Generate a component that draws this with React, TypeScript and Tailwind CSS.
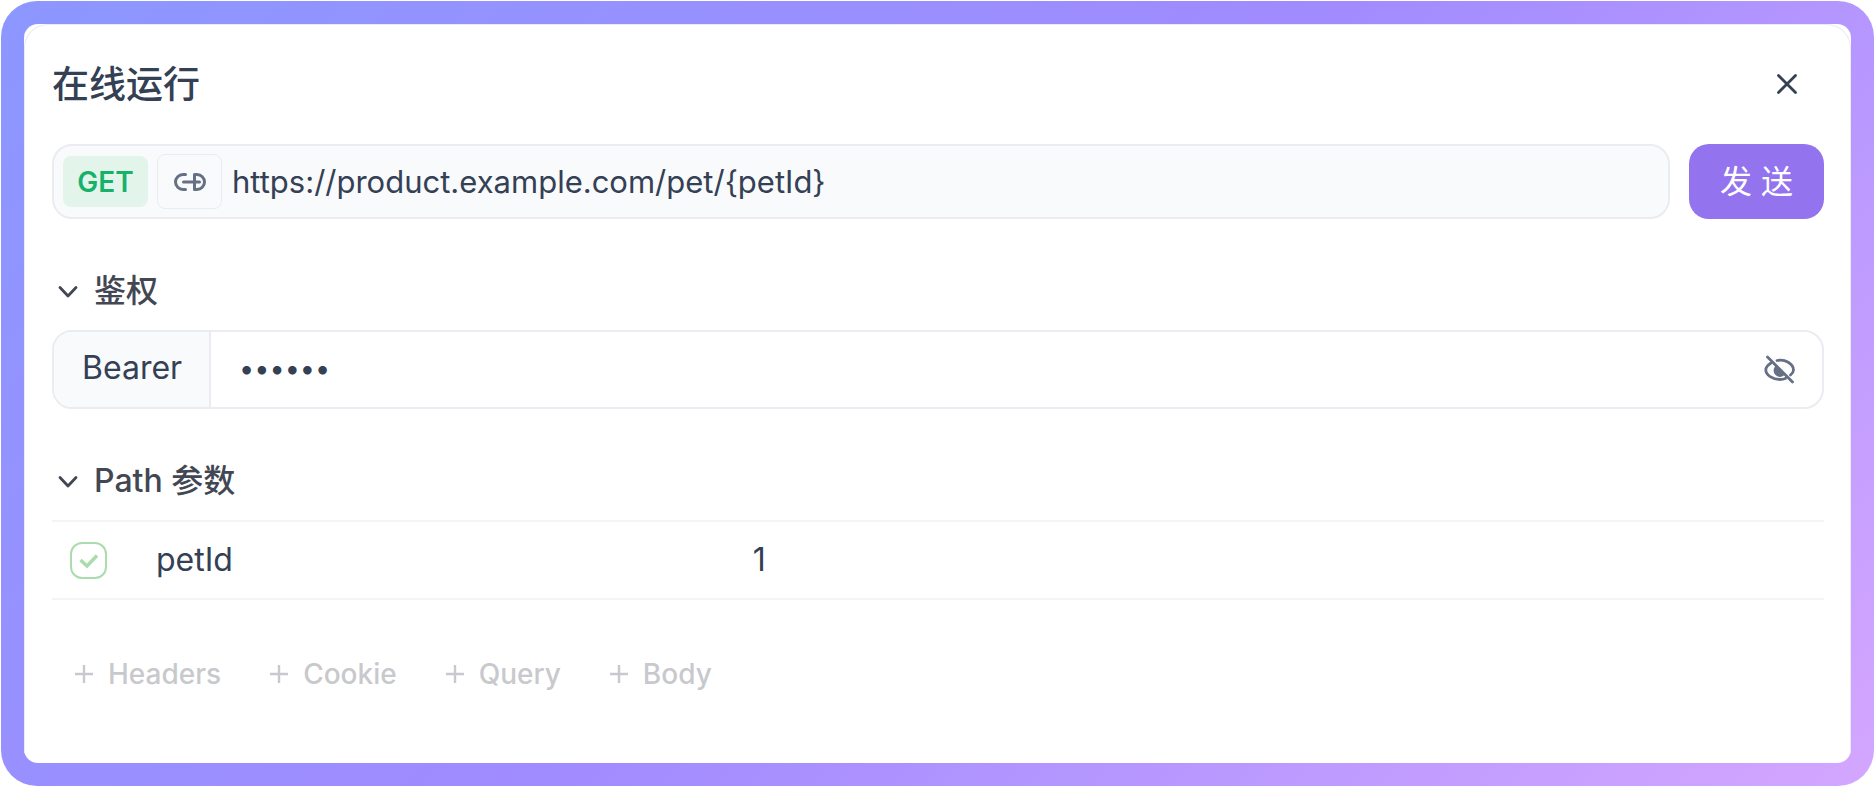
import React, { useState } from "react";

const extras = ["Headers", "Cookie", "Query", "Body"];

const Chevron = () => (
  <svg className="w-5 h-5" viewBox="0 0 20 20" fill="none" stroke="currentColor" strokeWidth="2.8" strokeLinecap="round" strokeLinejoin="round">
    <path d="M2 6.500l8 8.500 8-8.500" />
  </svg>
);

const SectionTitle = ({ children }: { children: React.ReactNode }) => (
  <h2 className="mt-[52px] mb-[19px] text-[#424753]">
    <button type="button" className="flex items-center gap-4 h-10 pl-1.5 text-[32px] font-medium">
      <Chevron />
      {children}
    </button>
  </h2>
);

const App = () => {
  const [token, setToken] = useState("123456");

  return (
    <div className="min-h-screen flex pt-px pl-px bg-white font-['Inter','Noto_Sans_CJK_SC',sans-serif] text-[#344054]">
      <div className="flex flex-1 p-[23px] rounded-[36px] bg-linear-135 from-[#8c97ff] via-[#a08bff] to-[#d4a6ff]">
        <main className="flex-1 min-w-0 rounded-[14px] bg-white overflow-hidden">
          <div className="h-full pl-[27px] pr-[26px] pt-10 pb-10 border border-[#ebecf0] border-b-0 rounded-t-[24px]">
            {/* Title bar */}
            <header className="flex items-center justify-between h-10 mb-[39px]">
              <h1 className="text-[37px] font-medium">在线运行</h1>
              <button type="button" aria-label="关闭" className="mr-[25px]">
                <svg className="w-6 h-6" viewBox="0 0 24 24" fill="none" stroke="currentColor" strokeWidth="2.8" strokeLinecap="round">
                  <path d="M3.500 2.500l17 17M20.500 2.500l-17 17" />
                </svg>
              </button>
            </header>

            {/* Request line */}
            <div className="flex gap-[19px]">
              <div className="flex flex-1 min-w-0 items-center h-[75px] px-[9px] border-2 border-[#ebecf1] rounded-[20px] bg-[#f9fafc]">
                <span className="flex shrink-0 items-center justify-center w-[85px] h-[51px] rounded-lg bg-[#e3f5ea] text-[28px] font-semibold text-[#17b26a]">GET</span>
                <button type="button" aria-label="链接" className="flex shrink-0 items-center justify-center w-[65px] h-[55px] ml-[9px] border border-[#ebecf1] rounded-lg text-[#667085]">
                  <svg className="w-8 h-5" viewBox="0 0 32 20" fill="none" stroke="currentColor" strokeWidth="3" strokeLinecap="round" strokeLinejoin="round">
                    <path d="M11.500 2.500H9a7.500 7.500 0 0 0 0 15h2.500M9.500 10h16M20.500 2.500h2.500a7.500 7.500 0 0 1 0 15h-2.500z" />
                  </svg>
                </button>
                <input aria-label="URL" defaultValue="https://product.example.com/pet/{petId}" className="flex-1 min-w-0 h-full pl-2.5 text-[31px] outline-none" />
              </div>
              <button type="button" className="w-[135px] h-[75px] rounded-[20px] bg-[#9373ee] text-[32px] text-white">发 送</button>
            </div>

            <SectionTitle>鉴权</SectionTitle>
            <div className="flex items-stretch h-[79px] border-2 border-[#ebecf1] rounded-[20px] overflow-hidden">
              <label htmlFor="token" className="flex items-center pl-7 pr-[27px] pb-1 border-r-2 border-[#ebecf1] bg-[#f9fafc] text-[32px]">Bearer</label>
              <input id="token" type="password" value={token} onChange={(e) => setToken(e.target.value)} className="flex-1 min-w-0 px-7 text-[27px] outline-none" />
              <button type="button" aria-label="显示" className="px-[26px] text-[#667085]">
                <svg className="w-8 h-8" viewBox="0 0 32 32" fill="none" stroke="currentColor" strokeWidth="2.800" strokeLinecap="round" strokeLinejoin="round">
                  <path d="M3.500 3l25 25M13 6.500c8-2 16.500 3.500 16.500 9.500 0 2-1.500 3.800-3 5M7 9c-3.200 2-5.200 4.500-5.200 7 0 5 7 9.500 14 9.500 2 0 4-.300 5.500-1" />
                  <path d="M12 13.500a5 5 0 0 0 7 7z" fill="currentColor" />
                </svg>
              </button>
            </div>

            <SectionTitle>Path 参数</SectionTitle>
            <table className="w-full text-[32px] text-left">
              <tbody>
                <tr className="h-[78px] border-y-2 border-[#f2f4f8]">
                  <td className="w-[104px] pl-[18px]">
                    <label className="relative flex w-[37px] h-[37px]">
                      <input type="checkbox" defaultChecked aria-label="petId" className="appearance-none w-full h-full border-2 border-[#abdcad] rounded-xl" />
                      <svg className="absolute inset-0 w-full h-full pointer-events-none text-[#abdcad]" viewBox="0 0 37 37" fill="none" stroke="currentColor" strokeWidth="3.500">
                        <path d="M10.500 18l6.500 6L27 13.500" />
                      </svg>
                    </label>
                  </td>
                  <td className="w-1/3">petId</td>
                  <td className="pl-1.5">1</td>
                </tr>
              </tbody>
            </table>

            {/* Optional parts */}
            <div className="flex flex-wrap gap-[49px] mt-[54px] pl-[23px] text-[28px] font-medium text-[#c8c9cd]">
              {extras.map((name) => (
                <button key={name} type="button" className="flex items-center gap-[15px] h-10">
                  <svg className="w-[18px] h-[18px]" viewBox="0 0 18 18" fill="none" stroke="currentColor" strokeWidth="2.4">
                    <path d="M0 9h18M9 0v18" />
                  </svg>
                  {name}
                </button>
              ))}
            </div>
          </div>
        </main>
      </div>
    </div>
  );
};

export default App;
